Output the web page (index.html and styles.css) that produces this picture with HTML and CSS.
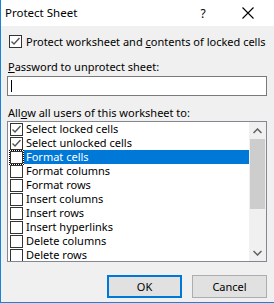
FILE: index.html
```html
<!DOCTYPE html>
<html>
<head>
<meta charset="utf-8">
<link rel="stylesheet" href="styles.css">
</head>
<body>
<div class="dialog">
  <div class="titlebar">
    <span class="title">Protect Sheet</span>
    <span class="help">?</span>
    <span class="close">
      <svg width="12" height="12" viewBox="0 0 12 12"><path d="M0.5 0.5 L11.5 11.5 M11.5 0.5 L0.5 11.5" stroke="#000" stroke-width="1.1" fill="none"/></svg>
    </span>
  </div>
  <div class="body">
    <div class="check-row">
      <span class="box checked">
        <svg width="11" height="11" viewBox="0 0 11 11"><path d="M1.5 5.5 L4 8 L9.5 2" stroke="#555" stroke-width="1.4" fill="none"/></svg>
      </span>
      <span class="text">Protect worksheet and <u>c</u>ontents of locked cells</span>
    </div>
    <div class="field-label"><u>P</u>assword to unprotect sheet:</div>
    <div class="input"><span class="caret"></span></div>
    <div class="field-label list-label">All<u>o</u>w all users of this worksheet to:</div>
    <div class="listbox">
      <ul class="items">
        <li class="item"><span class="box checked"><svg width="11" height="11" viewBox="0 0 11 11"><path d="M1.5 5.5 L4 8 L9.5 2" stroke="#555" stroke-width="1.4" fill="none"/></svg></span><span class="label">Select locked cells</span></li>
        <li class="item"><span class="box checked"><svg width="11" height="11" viewBox="0 0 11 11"><path d="M1.5 5.5 L4 8 L9.5 2" stroke="#555" stroke-width="1.4" fill="none"/></svg></span><span class="label">Select unlocked cells</span></li>
        <li class="item selected"><span class="box focus"></span><span class="label">Format cells</span></li>
        <li class="item"><span class="box"></span><span class="label">Format columns</span></li>
        <li class="item"><span class="box"></span><span class="label">Format rows</span></li>
        <li class="item"><span class="box"></span><span class="label">Insert columns</span></li>
        <li class="item"><span class="box"></span><span class="label">Insert rows</span></li>
        <li class="item"><span class="box"></span><span class="label">Insert hyperlinks</span></li>
        <li class="item"><span class="box"></span><span class="label">Delete columns</span></li>
        <li class="item"><span class="box"></span><span class="label">Delete rows</span></li>
      </ul>
      <div class="scrollbar">
        <span class="arrow">
          <svg width="9" height="6" viewBox="0 0 9 6"><path d="M0.5 5 L4.5 1 L8.5 5" stroke="#606060" stroke-width="1.5" fill="none"/></svg>
        </span>
        <div class="track"><div class="thumb"></div></div>
        <span class="arrow">
          <svg width="9" height="6" viewBox="0 0 9 6"><path d="M0.5 1 L4.5 5 L8.5 1" stroke="#606060" stroke-width="1.5" fill="none"/></svg>
        </span>
      </div>
    </div>
    <div class="buttons">
      <button class="btn default">OK</button>
      <button class="btn">Cancel</button>
    </div>
  </div>
</div>
</body>
</html>
```
FILE: styles.css
```css
html, body {
  margin: 0;
  padding: 0;
}
body {
  font-family: "Noto Sans", "Liberation Sans", sans-serif;
  font-size: 11px;
  color: #000;
  background: #f0f0f0;
}
.dialog {
  width: 274px;
  height: 303px;
  box-sizing: border-box;
  background: #f0f0f0;
  border-left: 1px solid #1883d7;
  border-bottom: 1px solid #1883d7;
  display: flex;
  flex-direction: column;
}
.titlebar {
  height: 26px;
  background: #fff;
  display: flex;
  align-items: center;
  padding-left: 4px;
  flex-shrink: 0;
}
.title {
  flex: 1;
  font-size: 11.5px;
  line-height: 16px;
  padding-bottom: 1px;
}
.help {
  width: 14px;
  font-size: 12px;
  margin-right: 32px;
  text-align: center;
}
.close {
  width: 12px;
  height: 12px;
  margin-right: 20px;
  display: flex;
}
.body {
  padding: 9px 7px 0 6px;
  display: flex;
  flex-direction: column;
}
.box {
  width: 13px;
  height: 13px;
  box-sizing: border-box;
  border: 1px solid #333;
  background: #fff;
  display: flex;
  align-items: center;
  justify-content: center;
  flex-shrink: 0;
}
.check-row {
  display: flex;
  align-items: center;
  height: 13px;
  padding-left: 2px;
}
.check-row .text {
  margin-left: 4px;
  white-space: nowrap;
}
.field-label {
  margin-top: 11px;
  line-height: 16px;
  padding-left: 1px;
  white-space: nowrap;
}
.input {
  margin-top: 1px;
  height: 20px;
  box-sizing: border-box;
  border: 1px solid #7a7a7a;
  background: #fff;
  display: flex;
  align-items: center;
  padding-left: 3px;
}
.caret {
  width: 1px;
  height: 12px;
  background: #000;
}
.list-label {
  margin-top: 9px;
}
.listbox {
  margin-top: 0px;
  height: 141px;
  box-sizing: border-box;
  border: 1px solid #828790;
  background: #fff;
  display: flex;
  overflow: hidden;
}
.items {
  list-style: none;
  margin: 0;
  padding: 0;
  flex: 1;
}
.item {
  height: 14px;
  display: flex;
  align-items: center;
  padding-left: 2px;
  white-space: nowrap;
}
.item .label {
  flex: 1;
  margin-left: 1px;
  padding-left: 2px;
  line-height: 14px;
  height: 14px;
}
.item.selected .label {
  background: #0078d7;
  color: #fff;
}
.box.focus {
  outline: 1px dotted #000;
  outline-offset: 0px;
}
.scrollbar {
  width: 17px;
  background: #f0f0f0;
  display: flex;
  flex-direction: column;
  flex-shrink: 0;
}
.arrow {
  height: 17px;
  display: flex;
  align-items: center;
  justify-content: center;
}
.track {
  flex: 1;
  padding: 0 1px;
}
.thumb {
  height: 70px;
  background: #cdcdcd;
}
.buttons {
  margin-top: 13px;
  display: flex;
  justify-content: flex-end;
  gap: 10px;
}
.btn {
  width: 75px;
  height: 23px;
  box-sizing: border-box;
  border: 1px solid #adadad;
  background: #e1e1e1;
  font-family: inherit;
  font-size: 11px;
  color: #000;
  padding: 0;
}
.btn.default {
  border: 2px solid #0078d7;
}
```
